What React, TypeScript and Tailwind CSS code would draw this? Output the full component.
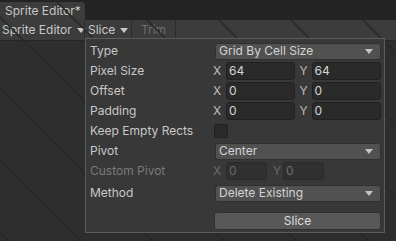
import React from "react";

const font = { fontFamily: "Inter, 'Noto Sans', sans-serif" };

function Arrow({ className }: { className?: string }) {
  return (
    <svg width="8" height="5" viewBox="0 0 8 5" className={`shrink-0 ${className ?? ""}`}>
      <path d="M0 0h8L4 5z" fill="currentColor" />
    </svg>
  );
}

function Dropdown({ value }: { value: string }) {
  return (
    <div className="ml-[2px] flex h-[17px] flex-1 items-center justify-between rounded-[3px] border border-[#303030] bg-[#515151] pl-[3px] pr-[7px] text-[#d4d4d4]">
      <span>{value}</span>
      <Arrow className="text-[#c4c4c4]" />
    </div>
  );
}

function Vec({ x, y }: { x: string; y: string }) {
  return (
    <div className="flex flex-1 gap-[5px]">
      <div className="flex flex-1 items-center">
        <span className="w-[13px] text-[#bdbdbd]">X</span>
        <div className="flex h-[18px] flex-1 items-center rounded-[3px] border border-[#212121] bg-[#2a2a2a] pl-[2px] text-[#d4d4d4]">{x}</div>
      </div>
      <div className="flex flex-1 items-center">
        <span className="w-[12px] text-[#bdbdbd]">Y</span>
        <div className="flex h-[18px] flex-1 items-center rounded-[3px] border border-[#212121] bg-[#2a2a2a] pl-[2px] text-[#d4d4d4]">{y}</div>
      </div>
    </div>
  );
}

function Row({ label, children, dim, className }: { label: string; children: React.ReactNode; dim?: boolean; className?: string }) {
  return (
    <div className={`flex h-5 items-center ${className ?? ""}`}>
      <span className={`w-[123px] shrink-0 ${dim ? "text-[#7a7a7a]" : "text-[#c8c8c8]"}`}>{label}</span>
      <div className="flex flex-1">{children}</div>
    </div>
  );
}

export default function App() {
  const lines = [-415, -343, -271, -199, -127, -55, 17, 89, 161, 233];
  return (
    <div className="relative flex h-[241px] w-[396px] flex-col overflow-hidden whitespace-nowrap bg-[#2e2e2e] text-[12px]" style={font}>
      {/* window tab strip */}
      <div className="flex h-5 shrink-0 items-end bg-[#232323]">
        <div className="flex h-[18px] w-[85px] items-center rounded-tr-[4px] bg-[#3c3c3c] pl-[5px] text-[#c8c8c8]">
          Sprite Editor*
        </div>
      </div>

      {/* toolbar */}
      <div className="flex h-[21px] shrink-0 items-stretch border-b border-[#262626] bg-[#3c3c3c] text-[#c8c8c8]">
        <div className="flex w-[85px] shrink-0 items-center gap-[5px] border-r border-[#2c2c2c] pl-[2px]">
          <span>Sprite Editor</span>
          <Arrow />
        </div>
        <div className="flex w-[47px] shrink-0 items-center gap-[5px] border-r border-[#2c2c2c] pl-[3px]">
          <span>Slice</span>
          <Arrow />
        </div>
        <div className="flex w-[44px] shrink-0 items-center justify-center border-r border-[#2c2c2c] text-[#6f6f6f]">Trim</div>
      </div>

      {/* sprite canvas */}
      <div className="relative flex-1">
        <svg className="absolute left-0 top-[-41px]" width="396" height="241">
          {lines.map((c) => (
            <line key={c} x1={-20} y1={c - 20} x2={420} y2={c + 420} stroke="#262626" strokeWidth="1.3" />
          ))}
        </svg>
      </div>

      {/* slice popup */}
      <div className="absolute left-[85px] top-[38px] flex w-[300px] flex-col border border-[#5c5c5c] bg-[#383838] pb-[2px] pl-[4px] pr-[3px] pt-[2px]">
        <Row label="Type">
          <Dropdown value="Grid By Cell Size" />
        </Row>
        <Row label="Pixel Size">
          <Vec x="64" y="64" />
        </Row>
        <Row label="Offset">
          <Vec x="0" y="0" />
        </Row>
        <Row label="Padding">
          <Vec x="0" y="0" />
        </Row>
        <Row label="Keep Empty Rects">
          <div className="ml-[1px] h-[14px] w-[14px] rounded-[2px] border border-[#212121] bg-[#2a2a2a]" />
        </Row>
        <Row label="Pivot">
          <Dropdown value="Center" />
        </Row>
        <Row label="Custom Pivot" dim>
          <div className="flex w-[111px] items-center text-[#6c6c6c]">
            <span className="w-[13px]">X</span>
            <div className="flex h-[18px] w-[41px] items-center rounded-[3px] border border-[#2a2a2a] bg-[#303030] pl-[2px]">0</div>
            <span className="ml-[6px] w-[10px]">Y</span>
            <div className="flex h-[18px] w-[41px] items-center rounded-[3px] border border-[#2a2a2a] bg-[#303030] pl-[2px]">0</div>
          </div>
        </Row>
        <Row label="Method" className="mt-[2px]">
          <Dropdown value="Delete Existing" />
        </Row>
        <div className="ml-[124px] mt-[9px] flex h-[18px] items-center justify-center rounded-[3px] border border-[#303030] bg-[#585858] text-[#dedede]">
          Slice
        </div>
      </div>
    </div>
  );
}
